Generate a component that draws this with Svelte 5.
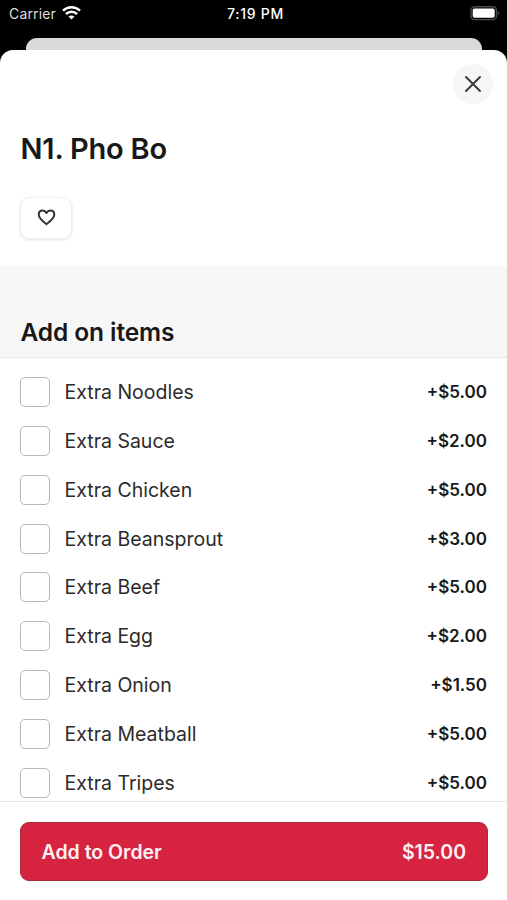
<script lang="ts">
	type AddOn = { name: string; price: number; checked: boolean };

	let favourite = false;
	let addOns: AddOn[] = [
		{ name: 'Extra Noodles', price: 5, checked: false },
		{ name: 'Extra Sauce', price: 2, checked: false },
		{ name: 'Extra Chicken', price: 5, checked: false },
		{ name: 'Extra Beansprout', price: 3, checked: false },
		{ name: 'Extra Beef', price: 5, checked: false },
		{ name: 'Extra Egg', price: 2, checked: false },
		{ name: 'Extra Onion', price: 1.5, checked: false },
		{ name: 'Extra Meatball', price: 5, checked: false },
		{ name: 'Extra Tripes', price: 5, checked: false }
	];

	const basePrice = 15;

	$: total = addOns.reduce((sum, item) => sum + (item.checked ? item.price : 0), basePrice);
</script>

<div class="screen">
	<header class="status">
		<div class="carrier">
			<span>Carrier</span>
			<svg width="19" height="14" viewBox="0 0 19 14" fill="none" stroke="#fff">
				<path d="M1 4.7C5.8 0.1 13.2 0.1 18 4.7" stroke-width="2.5" />
				<path d="M3.9 8C7.1 5 11.9 5 15.1 8" stroke-width="2.4" />
				<path d="M6.5 10.5C8.2 9 10.8 9 12.5 10.5L9.5 13.5Z" fill="#fff" stroke="none" />
			</svg>
		</div>
		<span class="time">7:19 PM</span>
		<svg class="battery" width="30" height="15" viewBox="0 0 30 15">
			<rect x="1" y="0.8" width="25.5" height="12.8" rx="3.6" fill="none" stroke="#4c4c4c" stroke-width="1.4" />
			<rect x="2.7" y="2.6" width="22" height="9.2" rx="1.8" fill="#fff" />
			<path d="M27.7 5.2c1.7.6 1.7 3.6 0 4.2z" fill="#555" />
		</svg>
	</header>

	<div class="behind"></div>

	<main class="sheet">
		<div class="top">
			<button class="close" aria-label="Close">
				<svg width="18" height="18" viewBox="0 0 18 18" fill="none" stroke="#3c3c3c" stroke-width="2" stroke-linecap="round">
					<path d="M2 2l14 14M16 2L2 16" />
				</svg>
			</button>
		</div>
		<h1>N1. Pho Bo</h1>
		<button class="heart" aria-label="Favourite" on:click={() => (favourite = !favourite)}>
			<svg width="19" height="17" viewBox="0 0 20 18" fill={favourite ? '#d62440' : 'none'} stroke="#333" stroke-width="2.1" stroke-linejoin="round">
				<path d="M10 16.1C7.2 13.9 1.8 10.2 1.8 5.9C1.8 3.4 3.6 1.7 5.9 1.7C7.7 1.7 9.1 2.7 10 4.3C10.900 2.7 12.3 1.7 14.1 1.7C16.4 1.7 18.2 3.4 18.2 5.9C18.2 10.2 12.8 13.9 10 16.1Z" />
			</svg>
		</button>

		<h2>Add on items</h2>

		<div class="list">
			{#each addOns as item}
				<label>
					<input type="checkbox" bind:checked={item.checked} />
					<span class="name">{item.name}</span>
					<span class="price">+${item.price.toFixed(2)}</span>
				</label>
			{/each}
		</div>

		<footer>
			<button class="order">
				<span>Add to Order</span>
				<span>${total.toFixed(2)}</span>
			</button>
		</footer>
	</main>
</div>

<style>
	.screen {
		display: flex;
		flex-direction: column;
		height: 900px;
		overflow: hidden;
		background: #000;
		color: #181818;
		font-family: Inter, sans-serif;
	}
	button {
		font-family: inherit;
		padding: 0;
		cursor: pointer;
	}
	svg {
		display: block;
	}

	.status {
		display: grid;
		grid-template-columns: 1fr auto 1fr;
		align-items: center;
		box-sizing: border-box;
		height: 38px;
		padding: 0 7px 11px 9px;
		color: #fff;
		font-size: 14px;
	}
	.carrier {
		display: flex;
		align-items: center;
		gap: 6px;
		color: #ddd;
		letter-spacing: 0.15px;
	}
	.carrier svg {
		margin-top: -2px;
	}
	.time {
		font-weight: 500;
		letter-spacing: 0.7px;
		margin-right: -2px;
	}
	.battery {
		justify-self: end;
	}

	.behind {
		height: 12px;
		margin: 0 25px 0 26px;
		border-radius: 11px 11px 0 0;
		background: #d9d9d9;
	}
	.sheet {
		display: flex;
		flex: 1;
		flex-direction: column;
		min-height: 0;
		border-radius: 13px 13px 0 0;
		background: #fff;
	}
	.top {
		display: flex;
		justify-content: flex-end;
		padding: 14px 14px 0;
	}
	.close {
		display: grid;
		place-items: center;
		width: 40px;
		height: 40px;
		border: none;
		border-radius: 50%;
		background: #f6f6f6;
	}
	h1 {
		margin: 26px 0 0 20.5px;
		font-size: 29px;
		font-weight: 600;
		line-height: 37px;
		letter-spacing: -0.2px;
	}
	.heart {
		display: grid;
		place-items: center;
		width: 52px;
		height: 42px;
		margin: 30px 0 27px 20px;
		padding-bottom: 2px;
		border: 1px solid #f0f0f0;
		border-radius: 9px;
		background: #fff;
		box-shadow: 0 1px 3px rgba(0, 0, 0, 0.12);
	}
	h2 {
		box-sizing: border-box;
		height: 92px;
		margin: 0;
		padding: 50px 20.5px 0;
		border-bottom: 1px solid #e9e9e9;
		background: #f7f7f7;
		font-size: 24.5px;
		font-weight: 600;
		line-height: 33px;
		letter-spacing: -0.1px;
	}

	.list {
		flex: 1;
		min-height: 0;
		padding-top: 9.5px;
		overflow: hidden;
	}
	label {
		display: flex;
		align-items: center;
		height: 48.87px;
		padding: 0 20px;
	}
	input {
		appearance: none;
		box-sizing: border-box;
		width: 30px;
		height: 30px;
		margin: 0 14.5px 0 0;
		border: 1.5px solid #b8b8b8;
		border-radius: 5px;
		background: #fff;
	}
	input:checked {
		border-color: #d62440;
		background: #d62440;
	}
	.name {
		flex: 1;
		color: #2b2b2b;
		font-size: 19.5px;
	}
	.price {
		font-size: 17px;
		font-weight: 600;
	}

	footer {
		box-sizing: border-box;
		height: 99px;
		padding: 20px 19px 19px 20px;
		border-top: 1px solid #e6e6e6;
		background: #fff;
	}
	.order {
		display: flex;
		align-items: center;
		justify-content: space-between;
		box-sizing: border-box;
		width: 100%;
		height: 59px;
		padding: 0 21px 0 20.5px;
		border: 1px solid #a62a3e;
		border-radius: 9px;
		background: #d62440;
		color: #fff0f2;
		font-size: 19.5px;
		font-weight: 600;
	}
</style>
